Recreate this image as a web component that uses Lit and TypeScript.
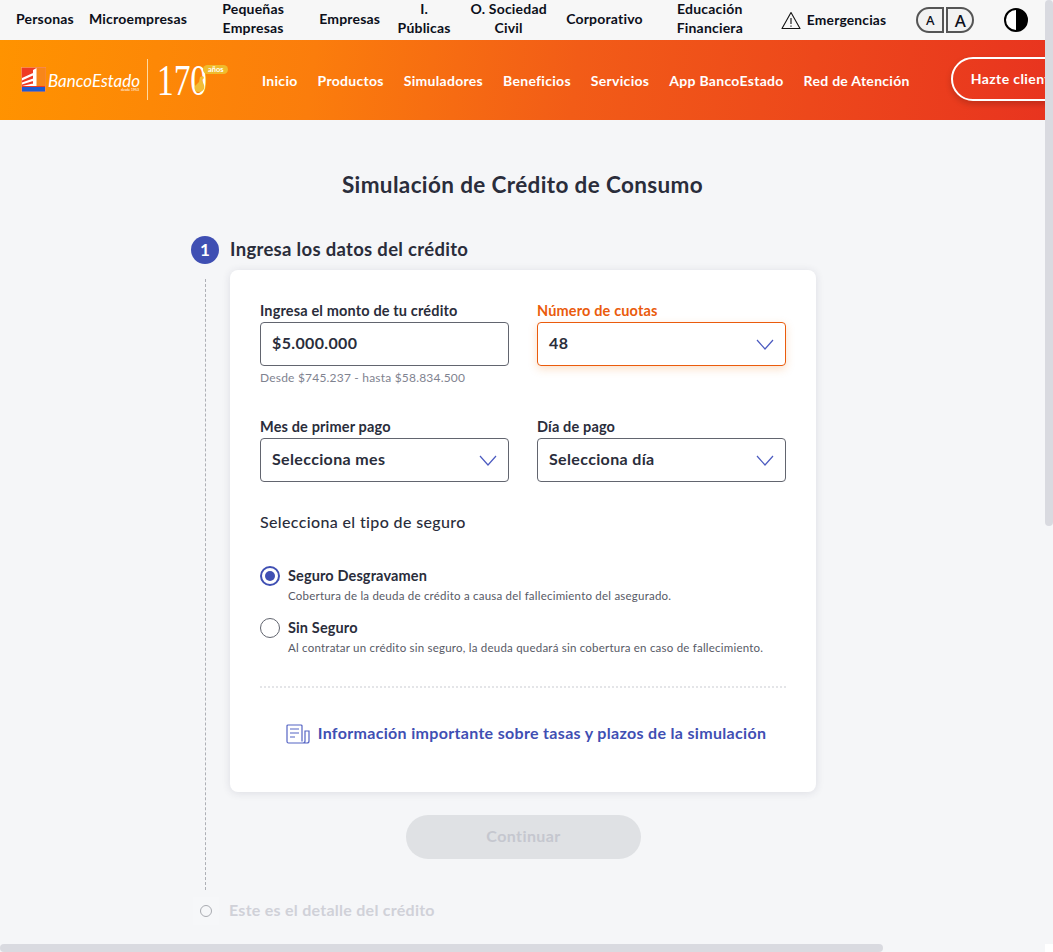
import { LitElement, html, css, svg } from "lit";
import { customElement } from "lit/decorators.js";

const chevron = html`<svg class="chev" width="18" height="11" viewBox="0 0 18 11"><path d="M1 1l8 9 8-9" fill="none" stroke="#4c5bc0" stroke-width="1.200"/></svg>`;

@customElement("app-root")
export class AppRoot extends LitElement {
  static styles = css`
    :host { display: block; width: 1053px; height: 952px; overflow: hidden; font-family: "Lato", "Noto Sans", sans-serif; color: #2a2d3b; }
    .frame { display: grid; grid-template-columns: 1045px 8px; grid-template-rows: 944px 8px; width: 1053px; height: 952px; background: #f5f6f8; }
    .view { overflow: hidden; min-width: 0; }
    .vtrack { background: #f5f6f8; }
    .vthumb { width: 8px; height: 526px; background: #d9dae0; border-radius: 4px; }
    .htrack { background: #f5f6f8; }
    .hthumb { width: 883px; height: 8px; background: #d9dae0; border-radius: 4px; }
    .corner { background: #fff; }

    .top { height: 40px; background: #f7f7f7; display: flex; align-items: center; padding-left: 16px; gap: 15px; font-size: 14px; font-weight: 700; color: #0c0f1a; line-height: 19px; white-space: nowrap; letter-spacing: 0.2px; }
    .top .t { margin-bottom: 4px; }
    .top .w { text-align: center; white-space: normal; }
    .w1 { width: 102px; } .w2 { width: 54px; } .w3 { width: 85px; } .w4 { width: 104px; }
    .wide { min-width: 63px; }
    .emer { display: flex; align-items: center; gap: 6px; margin-left: 4px; font-size: 13.8px; }
    .emer b { font-weight: 700; margin-bottom: 2px; }
    .fonts { display: flex; gap: 2px; margin-left: 15px; }
    .fbtn { width: 28px; height: 26px; box-sizing: border-box; border: 2px solid #555; display: flex; align-items: center; justify-content: center; font-weight: 500; background: #f2f2f2; font-family: "Noto Sans", sans-serif; color: #0c0f1a; letter-spacing: 0; }
    .fbtn.a { border-radius: 13px 0 0 13px; font-size: 13px; }
    .fbtn.b { border-radius: 0 13px 13px 0; font-size: 17px; }
    .contrast { margin-left: 15px; display: block; }

    .head { height: 80px; background: linear-gradient(97deg, #ff9300 0%, #fb7d0c 30%, #f25c17 55%, #e8341f 100%); display: flex; align-items: center; padding-left: 21px; white-space: nowrap; color: #fff; }
    .logo { display: block; flex: none; }
    .nav { display: flex; gap: 20px; margin-left: 29px; font-size: 14px; font-weight: 700; letter-spacing: 0.29px; }
    .cta { flex: none; margin-left: 41px; width: 135px; height: 44px; box-sizing: border-box; border: 2px solid #fff; border-radius: 22px; padding: 0 0 2px 18px; display: flex; align-items: center; font-size: 14px; font-weight: 700; letter-spacing: 0.4px; box-shadow: 0 3px 6px rgba(0,0,0,.18); position: relative; top: -1px; }

    h1 { margin: 0; padding-top: 50px; height: 30px; line-height: 30px; font-size: 22.5px; font-weight: 700; text-align: center; color: #2a2d3b; letter-spacing: 0.37px; box-sizing: content-box; }
    .stepper { display: grid; grid-template-columns: 28px 586px; column-gap: 11px; margin: 36px 0 0 191px; }
    .num { width: 28px; height: 28px; padding-bottom: 2px; box-sizing: border-box; border-radius: 50%; background: #3f4fb3; color: #fff; font-size: 17px; font-weight: 700; display: flex; align-items: center; justify-content: center; }
    .stitle { font-size: 18.5px; font-weight: 700; line-height: 26px; height: 28px; letter-spacing: 0.31px; }
    .rail { display: flex; justify-content: center; padding-top: 15px; box-sizing: border-box; }
    .rail i { display: block; width: 0; height: 100%; border-left: 1px dashed #aeb0b6; }
    .body { padding: 6px 0 31px; }
    .card { background: #fff; border-radius: 8px; box-shadow: 0 1px 8px rgba(40,45,70,.12); padding: 32px 30px 47px; height: 522px; box-sizing: border-box; }
    .grid { display: grid; grid-template-columns: 249px 249px; column-gap: 28px; row-gap: 32px; }
    label { display: block; font-size: 14.5px; line-height: 18px; font-weight: 700; margin-bottom: 2px; letter-spacing: 0.15px; }
    label.on { color: #ea5b0c; }
    .inp { height: 44px; box-sizing: border-box; border: 1px solid #62656f; border-radius: 4px; padding: 0 11px 3px; display: flex; align-items: center; justify-content: space-between; font-size: 16px; font-weight: 700; letter-spacing: 0.35px; }
    .inp.on { border-color: #ea5b0c; box-shadow: 0 3px 8px rgba(240,130,40,.25); }
    .chev { flex: none; margin-top: 3px; }
    .hint { margin-top: 4px; font-size: 12px; line-height: 16px; color: #7f8390; letter-spacing: 0.2px; }
    .r1 { min-height: 64px; }
    h2 { margin: 30px 0 35px; font-size: 16px; line-height: 20px; font-weight: 500; letter-spacing: 0.36px; }
    .radio { display: grid; grid-template-columns: 20px 1fr; column-gap: 8px; }
    .radio + .radio { margin-top: 15px; }
    .dot { width: 20px; height: 20px; box-sizing: border-box; border-radius: 50%; border: 1px solid #62656f; margin-top: -1px; }
    .dot.on { border: 2px solid #3f4fb3; display: flex; align-items: center; justify-content: center; }
    .dot.on::after { content: ""; width: 10px; height: 10px; border-radius: 50%; background: #3f4fb3; }
    .rl { font-size: 14.5px; line-height: 18px; font-weight: 700; letter-spacing: 0.13px; }
    .rd { grid-column: 2; margin-top: 2px; font-size: 11.5px; line-height: 16px; color: #575a66; letter-spacing: 0.22px; white-space: nowrap; }
    .sep { margin-top: 30px; border-top: 2px dotted #e4e5e8; }
    .link { display: flex; align-items: center; justify-content: center; gap: 8px; margin-top: 34px; padding-left: 6px; height: 24px; color: #3f4fb3; font-size: 16px; font-weight: 700; letter-spacing: 0.32px; }
    .link span { margin-bottom: 4px; }
    .btn { width: 235px; height: 44px; margin: 23px 0 0 176px; padding-bottom: 4px; box-sizing: border-box; border-radius: 22px; background: #dfe1e4; color: #c5c7cf; display: flex; align-items: center; justify-content: center; font-size: 16px; font-weight: 700; letter-spacing: 0.4px; }
    .mini { width: 26px; height: 28px; margin-top: 7px; margin-left: 2px; background: #f6f7f9; display: flex; align-items: center; justify-content: center; }
    .mini i { display: block; width: 12px; height: 12px; box-sizing: border-box; border: 1px solid #a9abb1; border-radius: 50%; }
    .t2 { margin-top: 7px; line-height: 26px; font-size: 16px; font-weight: 700; color: #d0d1d8; margin-left: -1px; letter-spacing: 0.26px; }
  `;

  private logo() {
    return html`<svg class="logo" width="212" height="44" viewBox="0 0 212 44">
      <rect x="0.5" y="9.500" width="24" height="24" fill="#ef3b24" stroke="#f7a070" stroke-width="0.600"/>
      <path d="M15 10h9.500v18H15z" fill="#f8861a"/>
      <path d="M12 12l3.500-2v18H12zM1 20l11-5v2.500L1 22.500zM1 24.500l11-4V23L1 26.500zM1 28l11-2.500V28z" fill="#fff"/>
      <rect x="1" y="29" width="23" height="4.500" fill="#1f5bd0"/>
      ${svg`<text x="27" y="28.500" font-family="Lato, sans-serif" font-size="18" font-style="italic" font-weight="400" fill="#fff" textLength="92" lengthAdjust="spacingAndGlyphs">BancoEstado</text>
      <text x="100" y="33" font-family="Lato, sans-serif" font-size="3.500" fill="#fff">desde 1953</text>`}
      <rect x="126" y="1" width="1" height="41" fill="#ffd9a0"/>
      ${svg`<text x="136" y="37" font-family="Liberation Serif, serif" font-size="44" font-weight="400" fill="#fff" textLength="50" lengthAdjust="spacingAndGlyphs">170</text>`}
      <path d="M178 34c-4 0-5-3-4-6l4-4 1-5 3-1 1 2-2 2 2 5c1 4-1 7-5 7z" fill="#f2bd38"/>
      <rect x="182" y="7" width="25" height="9" rx="4.500" fill="#f0bb2c"/>
      ${svg`<text x="187" y="14" font-family="Lato, sans-serif" font-size="7.500" font-weight="700" fill="#fff">años</text>`}
    </svg>`;
  }

  render() {
    return html`<div class="frame">
      <div class="view">
        <div class="top">
          <span class="t">Personas</span><span class="t">Microempresas</span>
          <span class="t w w1">Pequeñas Empresas</span><span class="t wide">Empresas</span>
          <span class="t w w2">I. Públicas</span><span class="t w w3">O. Sociedad Civil</span>
          <span class="t">Corporativo</span><span class="t w w4">Educación Financiera</span>
          <span class="emer">
            <svg width="20" height="19" viewBox="0 0 20 19"><path d="M10 1.500L19 17.500H1z" fill="none" stroke="#111" stroke-width="1.100" stroke-linejoin="round"/><path d="M10 7v6M10 14.500v1.200" stroke="#111" stroke-width="1.100"/></svg>
            <b>Emergencias</b>
          </span>
          <span class="fonts"><span class="fbtn a">A</span><span class="fbtn b">A</span></span>
          <svg class="contrast" width="24" height="24" viewBox="0 0 24 24"><circle cx="12" cy="12" r="11" fill="#fff" stroke="#000" stroke-width="2"/><path d="M12 1a11 11 0 0 1 0 22z" fill="#000"/></svg>
        </div>
        <div class="head">
          ${this.logo()}
          <nav class="nav"><span>Inicio</span><span>Productos</span><span>Simuladores</span><span>Beneficios</span><span>Servicios</span><span>App BancoEstado</span><span>Red de Atención</span></nav>
          <div class="cta">Hazte cliente</div>
        </div>
        <h1>Simulación de Crédito de Consumo</h1>
        <div class="stepper">
          <div class="num">1</div>
          <div class="stitle">Ingresa los datos del crédito</div>
          <div class="rail"><i></i></div>
          <div class="body">
            <div class="card">
              <div class="grid">
                <div class="r1">
                  <label>Ingresa el monto de tu crédito</label>
                  <div class="inp">$5.000.000</div>
                  <div class="hint">Desde $745.237 - hasta $58.834.500</div>
                </div>
                <div class="r1">
                  <label class="on">Número de cuotas</label>
                  <div class="inp on">48 ${chevron}</div>
                </div>
                <div>
                  <label>Mes de primer pago</label>
                  <div class="inp">Selecciona mes ${chevron}</div>
                </div>
                <div>
                  <label>Día de pago</label>
                  <div class="inp">Selecciona día ${chevron}</div>
                </div>
              </div>
              <h2>Selecciona el tipo de seguro</h2>
              <div class="radio"><span class="dot on"></span><span class="rl">Seguro Desgravamen</span><span class="rd">Cobertura de la deuda de crédito a causa del fallecimiento del asegurado.</span></div>
              <div class="radio"><span class="dot"></span><span class="rl">Sin Seguro</span><span class="rd">Al contratar un crédito sin seguro, la deuda quedará sin cobertura en caso de fallecimiento.</span></div>
              <div class="sep"></div>
              <div class="link">
                <svg width="24" height="20" viewBox="0 0 24 20" fill="none" stroke="#5564c4" stroke-width="1.200"><path d="M16 17.500V2a1 1 0 0 0-1-1H2a1 1 0 0 0-1 1v15.500a1.500 1.500 0 0 0 1.500 1.500H21a2 2 0 0 0 2-2V7h-4v10a2 2 0 0 1-2 2"/><path d="M4 5h9M4 9h9M4 13h5"/></svg>
                <span>Información importante sobre tasas y plazos de la simulación</span>
              </div>
            </div>
            <div class="btn">Continuar</div>
          </div>
          <div class="mini"><i></i></div>
          <div class="t2">Este es el detalle del crédito</div>
        </div>
      </div>
      <div class="vtrack"><div class="vthumb"></div></div>
      <div class="htrack"><div class="hthumb"></div></div>
      <div class="corner"></div>
    </div>`;
  }
}
